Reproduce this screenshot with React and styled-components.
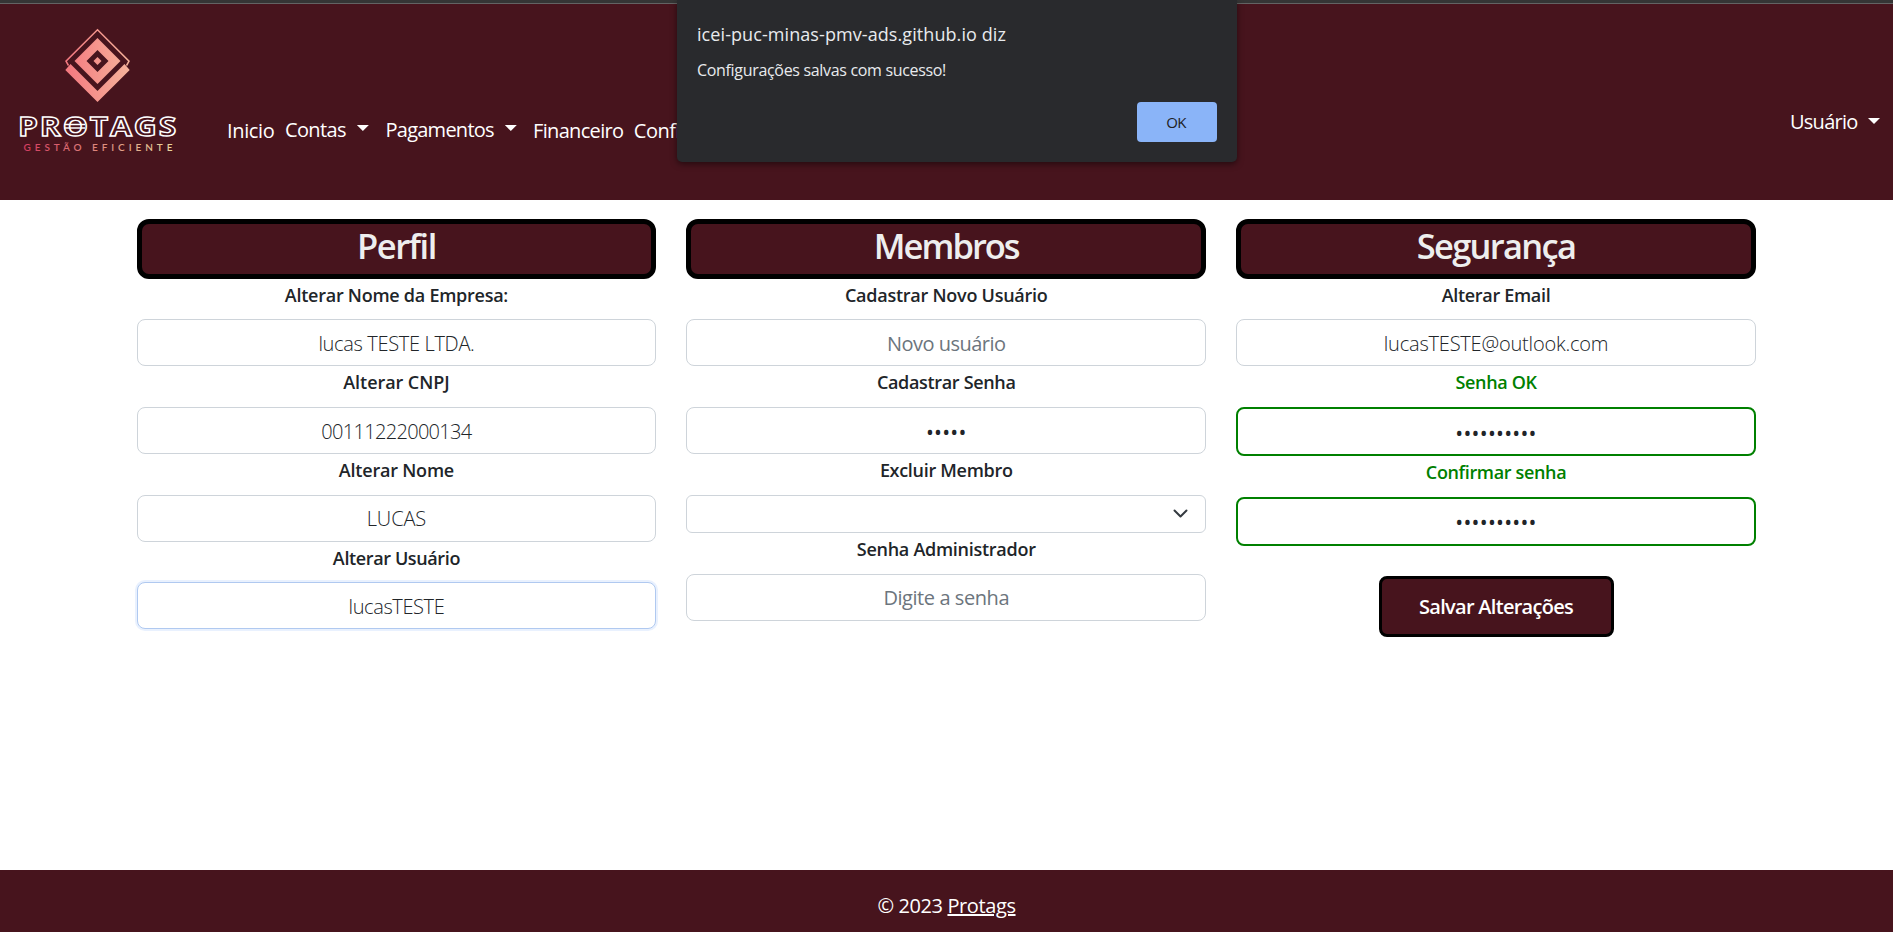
import React from "react";
import styled, { createGlobalStyle, css } from "styled-components";

const WINE = "#47141d";

const GlobalStyle = createGlobalStyle`
  *, *::before, *::after { box-sizing: border-box; }
  body {
    margin: 0;
    background: #fff;
    color: #212529;
    font-family: "Open Sans", "Noto Sans", sans-serif;
    font-size: 20px;
    overflow: hidden;
  }
`;

const Page = styled.div`
  height: 932px;
  display: flex;
  flex-direction: column;
`;

const Header = styled.header`
  height: 200px;
  display: flex;
  background: ${WINE};
  border-top: 3px solid #353535;
  color: #fff;

  &::before {
    content: "";
    width: 100%;
    height: 1px;
    margin-right: -100%;
    background: #636363;
  }
`;

const Logo = styled.svg`
  display: block;
  width: 227px;
  height: 197px;
  flex: none;
`;

const Nav = styled.nav`
  display: flex;
  padding-top: 112px;
`;

const NavItem = styled.a`
  display: flex;
  width: ${(p) => p.$width}px;
  margin-top: ${(p) => p.$drop || 0}px;
  line-height: 30px;
  height: 30px;
  letter-spacing: ${(p) => p.$tracking}px;
  white-space: nowrap;
  color: #fff;
`;

const Caret = styled.span`
  width: 12px;
  height: 6px;
  margin: ${(p) => p.$top}px 0 0 ${(p) => p.$left}px;
  background: #fff;
  clip-path: polygon(0 0, 100% 0, 50% 100%);
`;

const UserMenu = styled.div`
  display: flex;
  margin-left: auto;
  padding: 104px 13px 0 0;
  line-height: 30px;
  letter-spacing: -0.75px;
`;

const Main = styled.main`
  flex: 1;
  display: grid;
  grid-template-columns: repeat(3, 1fr);
  gap: 30.1px;
  align-items: start;
  padding: 19px 137.1px 0 136.6px;
`;

const Column = styled.section`
  display: flex;
  flex-direction: column;
`;

const Title = styled.h2`
  height: 60px;
  margin: 0 0 -0.5px;
  border: 5px solid #000;
  border-radius: 12px;
  background: ${WINE};
  color: #eee;
  font-size: 34.5px;
  font-weight: 600;
  line-height: 43px;
  text-align: center;
  letter-spacing: ${(p) => p.$tracking}px;
`;

const Label = styled.label`
  height: 40.7px;
  font-size: 18px;
  font-weight: 600;
  line-height: 33.5px;
  text-align: center;
  letter-spacing: ${(p) => p.$tracking}px;
  color: ${(p) => (p.$ok ? "#008000" : "inherit")};
`;

const Field = styled.div`
  height: ${(p) => (p.$ok ? 49 : 47)}px;
  display: flex;
  align-items: center;
  justify-content: center;
  padding-top: 1.6px;
  border: 1px solid #ced4da;
  border-radius: 8px;
  background: #fff;
  font-weight: ${(p) => (p.$placeholder ? 400 : 340)};
  color: ${(p) => (p.$placeholder ? "#6c757d" : "#212529")};
  letter-spacing: ${(p) => p.$tracking}px;
  ${(p) => p.$ok && css`border: 2px solid #008000;`}
  ${(p) => p.$focus && css`
    border-color: #b0c9f0;
    box-shadow: 0 0 0 2px #e9f1fe;
  `}
`;

const Secret = styled.span`
  font-weight: 400;
  font-size: 21px;
  line-height: 30px;
  padding-top: 1px;
  letter-spacing: 0.25px;
`;

const Select = styled.div`
  height: 38.3px;
  display: flex;
  align-items: center;
  justify-content: flex-end;
  padding: 0 16px 0 0;
  border: 1px solid #ced4da;
  border-radius: 6px;
`;

const SaveButton = styled.button`
  align-self: center;
  width: 235px;
  height: 61px;
  margin-top: 30px;
  padding: 1px 0 0;
  border: 3px solid #000;
  border-radius: 8px;
  background: ${WINE};
  color: #fff;
  font: 600 20px/30px "Open Sans", sans-serif;
  letter-spacing: -0.71px;
`;

const Footer = styled.footer`
  height: 62px;
  padding-top: 21px;
  background: ${WINE};
  color: #fff;
  text-align: center;
  line-height: 30px;
  letter-spacing: -0.4px;
`;

const FooterLink = styled.a`
  text-decoration: underline;
  text-decoration-thickness: 2px;
  text-underline-offset: 1px;
`;

const Dialog = styled.div`
  position: absolute;
  top: 0;
  left: 677px;
  width: 560px;
  height: 162px;
  padding: 19px 20px 20px;
  display: flex;
  flex-direction: column;
  border-radius: 0 0 5px 5px;
  background: #292a2d;
  color: #e8eaed;
  box-shadow: 0 2px 6px rgba(0, 0, 0, 0.5);
`;

const DialogTitle = styled.div`
  font-size: 18px;
  line-height: 30px;
  letter-spacing: 0.08px;
`;

const DialogText = styled.div`
  margin-top: 9px;
  font-size: 16px;
  line-height: 25px;
  letter-spacing: -0.32px;
`;

const DialogButton = styled.button`
  align-self: flex-end;
  width: 80px;
  height: 40px;
  margin-top: auto;
  padding: 0 2px 1px 0;
  border: 0;
  border-radius: 4px;
  background: #8ab4f8;
  color: #202124;
  font: 400 15px/20px "Open Sans", sans-serif;
  letter-spacing: -0.8px;
`;

function ProtagsLogo() {
  return (
    <Logo viewBox="0 3 227 197">
      <defs>
        <linearGradient id="coral" gradientUnits="userSpaceOnUse" x1="65" y1="0" x2="130" y2="0">
          <stop offset="0" stopColor="#f4777f" />
          <stop offset="1" stopColor="#f6b49b" />
        </linearGradient>
        <linearGradient id="tagline" gradientUnits="userSpaceOnUse" x1="24" y1="0" x2="172" y2="0">
          <stop offset="0" stopColor="#d43c60" />
          <stop offset="1" stopColor="#e8d59c" />
        </linearGradient>
      </defs>
      <path d="M68.5 65.5 L66 61.2 L97.5 29.7 L129 61.2 L126.5 65.5" fill="none" stroke="url(#coral)" strokeWidth="1.5" />
      <path d="M65.3 70 L70.5 64 L97.5 91 L124.5 64 L129.7 70 L97.5 102 Z" fill="url(#coral)" />
      <path
        d="M97.5 38 L120.5 61 L97.5 84 L74.5 61 Z M97.5 50 L86.5 61 L97.5 72 L108.5 61 Z"
        fill="url(#coral)"
        fillRule="evenodd"
      />
      <path d="M97.5 57 L101.5 61 L97.5 65 L93.5 61 Z" fill="url(#coral)" />
      <text
        x="18" y="136" textLength="160" lengthAdjust="spacingAndGlyphs"
        fontFamily="Open Sans" fontWeight="700" fontSize="27.5" letterSpacing="1.6"
        fill="none" stroke="#fff" strokeWidth="1.4"
      >
        PROTAGS
      </text>
      <path d="M64 124.5 H85 M64 128 H85" stroke="#fff" strokeWidth="1.3" />
      <text
        x="23.5" y="150.5" textLength="149" lengthAdjust="spacing"
        fontFamily="Lato" fontWeight="600" fontSize="10" fill="url(#tagline)"
      >
        GESTÃO EFICIENTE
      </text>
    </Logo>
  );
}

export default function App() {
  return (
    <Page>
      <GlobalStyle />
      <Header>
        <ProtagsLogo />
        <Nav>
          <NavItem $width={58} $tracking={-0.35} $drop={1}>Inicio</NavItem>
          <NavItem $width={100.5} $tracking={-0.63}>Contas<Caret $top={10} $left={11} /></NavItem>
          <NavItem $width={147.5} $tracking={-0.75}>Pagamentos<Caret $top={10} $left={11} /></NavItem>
          <NavItem $width={100.8} $tracking={-0.67} $drop={1}>Financeiro</NavItem>
          <NavItem $width={130} $tracking={-0.45} $drop={1}>Configurações</NavItem>
        </Nav>
        <UserMenu>Usuário<Caret $top={11} $left={10.5} /></UserMenu>
      </Header>

      <Main>
        <Column>
          <Title $tracking={-1.5}>Perfil</Title>
          <Label $tracking={-0.26}>Alterar Nome da Empresa:</Label>
          <Field $tracking={-0.33}>lucas TESTE LTDA.</Field>
          <Label $tracking={-0.06}>Alterar CNPJ</Label>
          <Field $tracking={-0.69}>00111222000134</Field>
          <Label $tracking={-0.21}>Alterar Nome</Label>
          <Field $tracking={-0.1}>LUCAS</Field>
          <Label $tracking={-0.38}>Alterar Usuário</Label>
          <Field $tracking={-0.4} $focus>lucasTESTE</Field>
        </Column>

        <Column>
          <Title $tracking={-2}>Membros</Title>
          <Label $tracking={-0.25}>Cadastrar Novo Usuário</Label>
          <Field $tracking={-0.52} $placeholder>Novo usuário</Field>
          <Label $tracking={-0.33}>Cadastrar Senha</Label>
          <Field><Secret>•••••</Secret></Field>
          <Label $tracking={-0.3}>Excluir Membro</Label>
          <Select>
            <svg width="17" height="12" viewBox="0 0 17 12" fill="none">
              <path d="M2.5 2.5 L8.5 8.5 L14.5 2.5" stroke="#343a40" strokeWidth="2" strokeLinecap="round" strokeLinejoin="round" />
            </svg>
          </Select>
          <Label $tracking={-0.27}>Senha Administrador</Label>
          <Field $tracking={-0.43} $placeholder>Digite a senha</Field>
        </Column>

        <Column>
          <Title $tracking={-1.7}>Segurança</Title>
          <Label $tracking={-0.31}>Alterar Email</Label>
          <Field $tracking={-0.2}>lucasTESTE@outlook.com</Field>
          <Label $tracking={-0.35} $ok>Senha OK</Label>
          <Field $ok><Secret>••••••••••</Secret></Field>
          <Label $tracking={-0.35} $ok>Confirmar senha</Label>
          <Field $ok><Secret>••••••••••</Secret></Field>
          <SaveButton>Salvar Alterações</SaveButton>
        </Column>
      </Main>

      <Footer>© 2023 <FooterLink>Protags</FooterLink></Footer>

      <Dialog>
        <DialogTitle>icei-puc-minas-pmv-ads.github.io diz</DialogTitle>
        <DialogText>Configurações salvas com sucesso!</DialogText>
        <DialogButton>OK</DialogButton>
      </Dialog>
    </Page>
  );
}
